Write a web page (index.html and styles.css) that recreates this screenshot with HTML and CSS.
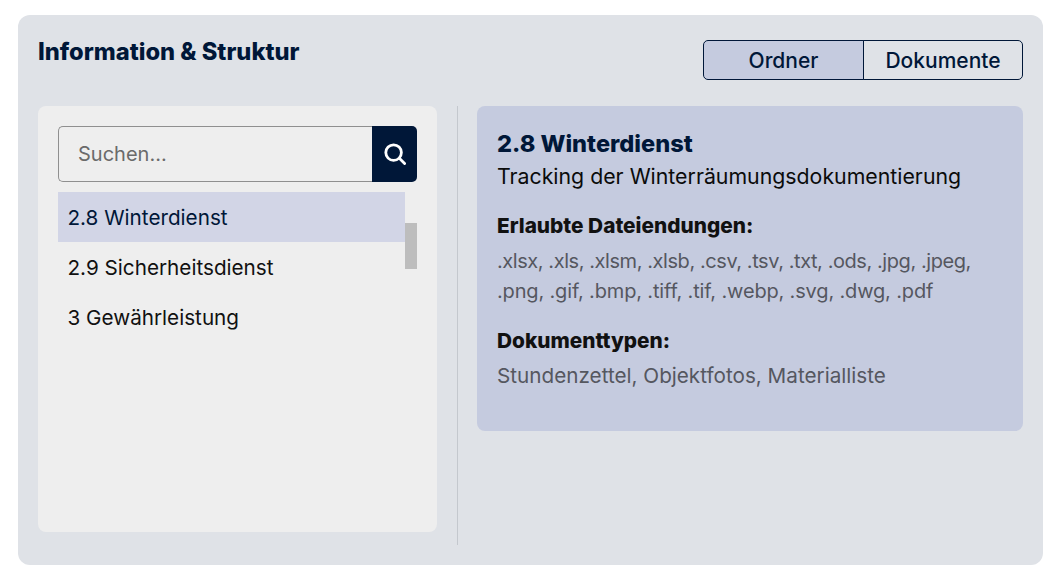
FILE: index.html
```html
<!DOCTYPE html>
<html lang="de">
<head>
<meta charset="utf-8">
<title>Information &amp; Struktur</title>
<link rel="stylesheet" href="styles.css">
</head>
<body>
<main class="card">
  <header class="card-head">
    <h1 class="card-title">Information &amp; Struktur</h1>
    <div class="toggle">
      <button class="toggle-btn toggle-btn-ordner is-active">Ordner</button>
      <button class="toggle-btn toggle-btn-dok">Dokumente</button>
    </div>
  </header>
  <div class="columns">
    <section class="tree-panel">
      <div class="search">
        <div class="search-input">Suchen...</div>
        <button class="search-btn" aria-label="Suchen">
          <svg width="22" height="22" viewBox="0 0 22 22" fill="none" stroke="#fff" stroke-width="2.8" stroke-linecap="round"><circle cx="9.6" cy="9.6" r="7.8"/><path d="M15.6 15.6 20.6 20.6"/></svg>
        </button>
      </div>
      <div class="list-wrap">
        <ul class="list">
          <li class="list-item is-selected">2.8 Winterdienst</li>
          <li class="list-item">2.9 Sicherheitsdienst</li>
          <li class="list-item">3 Gewährleistung</li>
        </ul>
        <div class="scrollbar"><div class="scroll-thumb"></div></div>
      </div>
    </section>
    <div class="divider"></div>
    <section class="info-panel">
      <h2 class="info-title">2.8 Winterdienst</h2>
      <p class="info-sub">Tracking der Winterräumungsdokumentierung</p>
      <h3 class="info-label">Erlaubte Dateiendungen:</h3>
      <p class="info-text">
        <span class="ext-line ext-line-first">.xlsx, .xls, .xlsm, .xlsb, .csv, .tsv, .txt, .ods, .jpg, .jpeg,</span>
        <span class="ext-line ext-line-second">.png, .gif, .bmp, .tiff, .tif, .webp, .svg, .dwg, .pdf</span>
      </p>
      <h3 class="info-label">Dokumenttypen:</h3>
      <p class="info-text">Stundenzettel, Objektfotos, Materialliste</p>
    </section>
  </div>
</main>
</body>
</html>
```

FILE: styles.css
```css
* { box-sizing: border-box; }
html, body { margin: 0; padding: 0; background: #fff; }
body {
  padding: 15px 2px 16px 18px;
  height: 581px;
  overflow: hidden;
  font-family: Inter, "Noto Sans", sans-serif;
  color: #111;
}
.card {
  height: 550px;
  background: #dfe2e7;
  border-radius: 12px;
  padding: 20px 20px 20px;
}
.card-head {
  display: flex;
  justify-content: space-between;
  align-items: flex-start;
  height: 71px;
}
.card-title {
  margin: 4px 0 0;
  font-size: 23.7px;
  line-height: 26px;
  font-weight: 800;
  color: #001738;
}
.toggle { display: flex; margin-top: 5px; }
.toggle-btn {
  height: 40px;
  font: 500 21px/1 Inter, "Noto Sans", sans-serif;
  color: #001738;
  border: 1px solid #001738;
  background: transparent;
  padding: 0;
}
.toggle-btn-ordner { width: 161px; border-radius: 5px 0 0 5px; }
.toggle-btn-dok { width: 160px; margin-left: -1px; border-radius: 0 5px 5px 0; }
.is-active { background: #c5cbdf; }
.columns { display: flex; align-items: flex-start; }
.tree-panel {
  width: 399px;
  height: 426px;
  background: #eeeeee;
  border-radius: 8px;
  padding: 20px;
}
.search { display: flex; height: 56px; }
.search-input {
  flex: 1;
  border: 1px solid #8f8f8f;
  border-right: 0;
  border-radius: 5px 0 0 5px;
  padding-left: 19px;
  font-size: 20px;
  line-height: 54px;
  color: #6a6a6a;
}
.search-btn {
  width: 45px;
  border: 0;
  padding: 0;
  background: #001738;
  border-radius: 0 5px 5px 0;
  display: flex;
  align-items: center;
  justify-content: center;
}
.list-wrap { display: flex; margin-top: 10px; }
.list { list-style: none; margin: 0; padding: 0; width: 347px; }
.list-item {
  height: 50px;
  line-height: 52px;
  padding-left: 9.5px;
  font-size: 20.7px;
  color: #111;
}
.is-selected { background: #d2d5e6; color: #001738; }
.scrollbar { width: 12px; padding-top: 31px; }
.scroll-thumb { height: 46px; background: #bdbdbd; }
.divider {
  width: 1px;
  height: 439px;
  margin: 0 19px 0 20px;
  background: #c4c8ce;
}
.info-panel {
  width: 546px;
  height: 325px;
  background: #c5cbdf;
  border-radius: 8px;
  padding: 23px 20px 0;
}
.info-title {
  margin: 0;
  font-size: 23.6px;
  line-height: 30px;
  font-weight: 800;
  color: #001738;
}
.info-sub {
  margin: 2px 0 0;
  font-size: 21.3px;
  line-height: 30px;
  color: #0b0b0b;
}
.info-label {
  margin: 20px 0 0;
  font-size: 20.8px;
  line-height: 30px;
  font-weight: 800;
  color: #111;
}
.info-text {
  margin: 5px 0 0;
  font-size: 20.7px;
  line-height: 30px;
  color: #55575f;
}
.ext-line { display: block; font-size: 20px; white-space: nowrap; }
.ext-line-first { letter-spacing: -0.43px; }
.ext-line-second { letter-spacing: -0.16px; }
```
